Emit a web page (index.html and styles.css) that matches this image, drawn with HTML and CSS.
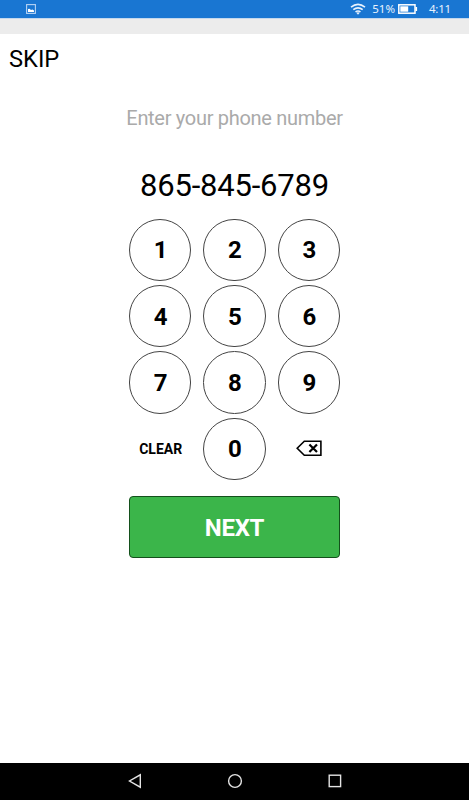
FILE: index.html
```html
<!DOCTYPE html>
<html lang="en">
<head>
    <meta charset="UTF-8">
    <meta name="viewport" content="width=device-width, initial-scale=1.0">
    <title>Enter your phone number</title>
    <link rel="stylesheet" href="styles.css">
</head>
<body>
    <div class="status-bar">
        <svg class="picture-icon" width="10" height="10" viewBox="0 0 10 10">
            <rect x="0.6" y="0.6" width="8.8" height="8.8" fill="none" stroke="#b5d3f4" stroke-width="1.1"/>
            <path d="M2 8V5l1.5-.2L5 6l1.5-.5L8 6.5V8z" fill="#fff"/>
        </svg>
        <div class="status-right">
            <svg class="wifi-icon" width="16" height="12" viewBox="0 0 16 12" fill="none" stroke="#e8f2fd" stroke-width="1.6">
                <path d="M1 4.2Q8-1.4 15 4.2"/>
                <path d="M3.3 6.7Q8 2.9 12.7 6.7"/>
                <path d="M5.5 9Q8 7 10.5 9"/>
                <path d="M6.3 9.8Q8 8.6 9.7 9.8L8 11.7z" fill="#e8f2fd" stroke="none"/>
            </svg>
            <span class="percent">51%</span>
            <svg class="battery-icon" width="20" height="10" viewBox="0 0 20 10">
                <rect x="0.8" y="0.8" width="16.2" height="8.4" fill="none" stroke="#fff" stroke-width="1.5"/>
                <rect x="2.3" y="2.3" width="7.9" height="5.4" fill="#fff"/>
                <rect x="17.4" y="3" width="1.7" height="4" fill="#fff"/>
            </svg>
            <span class="time">4:11</span>
        </div>
    </div>
    <div class="title-strip"></div>

    <div class="content">
        <a class="skip">SKIP</a>
        <div class="hint">Enter your phone number</div>
        <div class="number">865-845-6789</div>

        <div class="keypad">
            <button class="key">1</button>
            <button class="key">2</button>
            <button class="key">3</button>
            <button class="key">4</button>
            <button class="key">5</button>
            <button class="key">6</button>
            <button class="key">7</button>
            <button class="key">8</button>
            <button class="key">9</button>
            <button class="key clear">CLEAR</button>
            <button class="key">0</button>
            <button class="key backspace" aria-label="Delete">
                <svg width="26" height="17" viewBox="0 0 26 17" fill="none" stroke="#000">
                    <path d="M8.3 1.2H24.9V15.3H8.3L1.2 8.25z" stroke-width="1.6"/>
                    <path d="M13.4 4.4l7.6 7.7M21 4.4l-7.6 7.7" stroke-width="2.2"/>
                </svg>
            </button>
        </div>

        <button class="next">NEXT</button>
    </div>

    <div class="nav-bar">
        <svg width="14" height="16" viewBox="0 0 14 16" fill="none" stroke="#e4e4e4" stroke-width="1.4">
            <path d="M12.3 1.8v12.4L1.5 8z"/>
        </svg>
        <svg width="16" height="16" viewBox="0 0 16 16" fill="none" stroke="#e4e4e4" stroke-width="1.4">
            <circle cx="8" cy="8" r="6.4"/>
        </svg>
        <svg width="14" height="14" viewBox="0 0 14 14" fill="none" stroke="#e4e4e4" stroke-width="1.4">
            <rect x="1.2" y="1.2" width="11.4" height="11.4"/>
        </svg>
    </div>
</body>
</html>
```

FILE: styles.css
```css
* {
    box-sizing: border-box;
}
body {
    margin: 0;
    height: 800px;
    display: flex;
    flex-direction: column;
    background-color: #fff;
    color: #000;
    font-family: Roboto, sans-serif;
    overflow: hidden;
}
button {
    font-family: inherit;
    padding: 0;
    cursor: pointer;
}
svg {
    display: block;
}
.status-bar {
    height: 18px;
    flex: none;
    display: flex;
    align-items: center;
    justify-content: space-between;
    padding: 0 18px 0 26px;
    background-color: #1976d2;
    color: #e8f2fd;
    font-family: "Noto Sans", sans-serif;
    font-size: 11.5px;
    line-height: 18px;
}
.status-right {
    display: flex;
    align-items: center;
}
.percent {
    margin-left: 6px;
}
.battery-icon {
    margin-left: 3px;
}
.time {
    margin-left: 11px;
    letter-spacing: -0.2px;
}
.title-strip {
    height: 16px;
    flex: none;
    background-color: #ececec;
    border-top: 1px solid #c3d8ee;
}
.content {
    flex: 1;
    display: flex;
    flex-direction: column;
    align-items: center;
}
.skip {
    align-self: flex-start;
    margin: 11px 0 0 9px;
    font-size: 23.7px;
    line-height: 28px;
}
.hint {
    margin-top: 33px;
    font-size: 20px;
    line-height: 24px;
    letter-spacing: -0.3px;
    color: #aaa;
}
.number {
    margin-top: 38px;
    font-size: 31px;
    line-height: 36px;
    letter-spacing: -0.2px;
}
.keypad {
    display: grid;
    grid-template-columns: repeat(3, 62.5px);
    grid-auto-rows: 62.5px;
    gap: 3.8px 11.8px;
    margin-top: 14.7px;
}
.key {
    display: flex;
    align-items: center;
    justify-content: center;
    border: 1px solid #444;
    border-radius: 50%;
    background-color: transparent;
    color: #000;
    font-size: 24px;
    font-weight: bold;
    padding: 1px 0 0 1px;
}
.clear {
    border-color: transparent;
    font-size: 14px;
}
.backspace {
    border-color: transparent;
    padding: 0;
}
.next {
    width: 211px;
    height: 62.5px;
    margin-top: 15.6px;
    padding-top: 2px;
    border: 1px solid #14501c;
    border-radius: 4px;
    background-color: #3bb54a;
    color: #fff;
    font-size: 24px;
    font-weight: bold;
    letter-spacing: -0.3px;
}
.nav-bar {
    height: 37px;
    flex: none;
    display: flex;
    align-items: center;
    justify-content: center;
    gap: 85px;
    padding-bottom: 1px;
    background-color: #000;
}
```
